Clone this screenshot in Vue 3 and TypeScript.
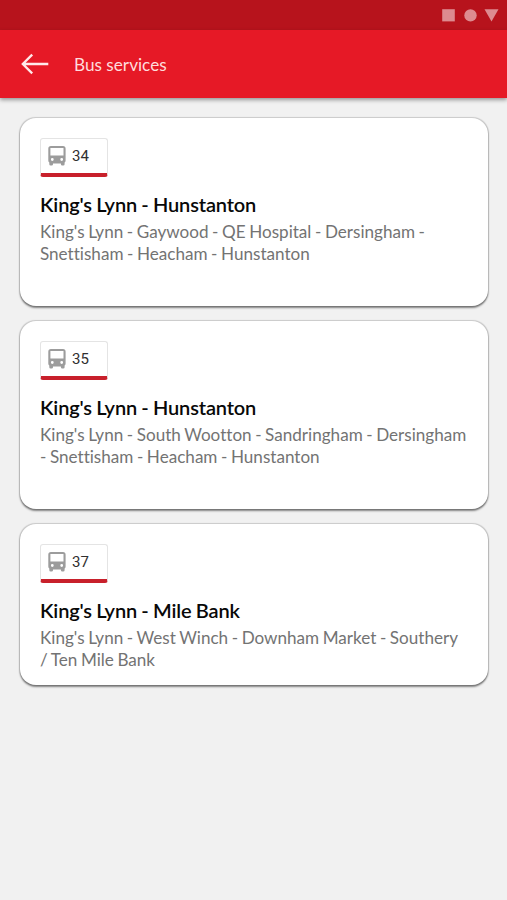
<script setup lang="ts">
interface Service {
  number: string
  title: string
  stops: string[]
  compact?: boolean
}

const services: Service[] = [
  {
    number: '34',
    title: "King's Lynn - Hunstanton",
    stops: ["King's Lynn - Gaywood - QE Hospital - Dersingham -", 'Snettisham - Heacham - Hunstanton'],
  },
  {
    number: '35',
    title: "King's Lynn - Hunstanton",
    stops: ["King's Lynn - South Wootton - Sandringham - Dersingham", '- Snettisham - Heacham - Hunstanton'],
  },
  {
    number: '37',
    title: "King's Lynn - Mile Bank",
    stops: ["King's Lynn - West Winch - Downham Market - Southery", '/ Ten Mile Bank'],
    compact: true,
  },
]
</script>

<template>
  <div class="screen">
    <div class="status">
      <svg width="57" height="14" viewBox="0 0 57 14" fill="#dd8b90" aria-hidden="true">
        <rect x="0.2" y="1.2" width="12.6" height="12.2" />
        <circle cx="28.5" cy="7.4" r="6.2" />
        <path d="M42.5 1.2H56.5L49.5 13.4Z" />
      </svg>
    </div>
    <header class="bar">
      <button class="back" aria-label="Back">
        <svg width="28" height="22" viewBox="0 0 28 22" fill="none" stroke="#ffe9e9" stroke-width="2.3">
          <path d="M27.3 11H2M11.2 1.6L1.8 11L11.2 20.4" />
        </svg>
      </button>
      <h1>Bus services</h1>
    </header>
    <main class="list">
      <article v-for="s in services" :key="s.number" class="card" :class="{ compact: s.compact }">
        <div class="badge">
          <svg width="18" height="20" viewBox="0 0 18 20" aria-hidden="true">
            <path
              fill="#9c9c9c"
              fill-rule="evenodd"
              d="M3 0H15Q17.6 0 17.6 2.7V14.5Q17.6 15.8 16.6 16.6V18.3Q16.6 19.6 15.2 19.6H14.3Q12.9 19.6 12.9 18.3V17.4H5V18.3Q5 19.6 3.6 19.6H2.7Q1.3 19.6 1.3 18.3V16.6Q.3 15.8 .3 14.5V2.7Q.3 0 3 0ZM2.4 2V9.4H15.5V2ZM4.3 12.1A1.4 1.4 0 1 0 4.3 14.9A1.4 1.4 0 1 0 4.3 12.1ZM13.7 12.1A1.4 1.4 0 1 0 13.7 14.9A1.4 1.4 0 1 0 13.7 12.1Z"
            />
          </svg>
          <span>{{ s.number }}</span>
        </div>
        <h2>{{ s.title }}</h2>
        <p><span v-for="line in s.stops" :key="line">{{ line }}</span></p>
      </article>
    </main>
  </div>
</template>

<style>
body {
  background: #f1f1f1;
}
</style>

<style scoped>
.screen {
  min-height: 900px;
  background: #f1f1f1;
  font-family: Lato, 'Liberation Sans', sans-serif;
  font-variant-ligatures: none;
}
.status {
  display: flex;
  justify-content: flex-end;
  box-sizing: border-box;
  height: 30px;
  padding: 8px 8px 0 0;
  background: #b7131c;
}
.bar {
  display: flex;
  align-items: center;
  gap: 25px;
  height: 68px;
  padding-left: 21px;
  background: #e61926;
  box-shadow: 0 2px 4px rgba(0, 0, 0, 0.38);
}
.back {
  display: flex;
  padding: 0;
  border: 0;
  background: none;
}
h1 {
  margin: 1px 0 0;
  color: #ffdcdc;
  font-size: 17.2px;
  font-weight: 400;
  line-height: 24px;
}
.list {
  display: flex;
  flex-direction: column;
  gap: 15px;
  padding: 20px 19px 0 20px;
}
.card {
  box-sizing: border-box;
  height: 188px;
  padding: 20px 20px 0;
  border-radius: 16px;
  background: #fff;
  box-shadow: 0 0 1px 0.5px rgba(0, 0, 0, 0.14), 0 1.5px 2px rgba(0, 0, 0, 0.45);
}
.compact {
  height: 161px;
}
.badge {
  display: flex;
  align-items: center;
  gap: 6px;
  box-sizing: border-box;
  width: 68px;
  height: 39px;
  padding: 0 0 1px 7px;
  border: 1px solid #e4e4e4;
  border-bottom: 4px solid #c8202b;
  border-radius: 3px;
  color: #303030;
  font-family: Roboto, sans-serif;
  font-size: 15px;
}
h2 {
  margin: 15px 0 0;
  color: #080808;
  font-size: 20px;
  font-weight: 600;
  line-height: 24px;
  letter-spacing: -0.15px;
  word-spacing: -0.5px;
  white-space: nowrap;
}
p {
  margin: 5px 0 0;
  color: #737373;
  font-size: 17.1px;
  line-height: 22px;
  word-spacing: -0.8px;
  white-space: nowrap;
}
p span {
  display: block;
}
</style>
